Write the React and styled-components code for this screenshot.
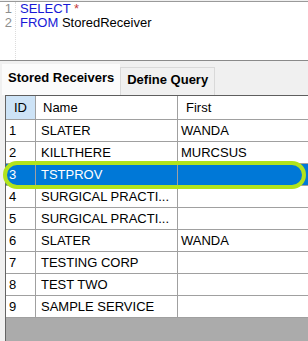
import React from "react";
import styled, { createGlobalStyle } from "styled-components";

const GlobalStyle = createGlobalStyle`
  *, *::before, *::after { box-sizing: border-box; }
  html, body { margin: 0; padding: 0; }
  body { background: #f0f0f0; font-family: "Liberation Sans", Arial, sans-serif; }
`;

const Page = styled.div`
  position: relative;
  width: 308px;
  height: 341px;
  display: flex;
  flex-direction: column;
  overflow: hidden;
  background: #f0f0f0;
`;

const Editor = styled.div`
  margin-top: 1px;
  height: 60px;
  background: #ffffff;
  border-top: 1px solid #9a9a9a;
  border-bottom: 1px solid #8a8a8a;
  display: flex;
  font-size: 13px;
  line-height: 14px;
`;

const Gutter = styled.div`
  width: 12px;
  text-align: right;
  color: #8e8e8e;
  display: flex;
  flex-direction: column;
`;

const GutterRule = styled.div`
  margin-left: 3px;
  border-left: 1px dotted #dcdcdc;
`;

const Code = styled.div`
  padding-left: 4px;
  display: flex;
  flex-direction: column;
  color: #000;
`;

const Keyword = styled.span`
  color: #1818d6;
`;

const Operator = styled.span`
  color: #c43a3a;
`;

const TabStrip = styled.div`
  height: 34px;
  display: flex;
  align-items: flex-end;
  padding-left: 2px;
  background: #f0f0f0;
`;

const Tab = styled.div`
  font-weight: bold;
  font-size: 13px;
  line-height: 16px;
  color: #000;
  white-space: nowrap;
  height: ${(p) => (p.$active ? "31px" : "28px")};
  padding: ${(p) => (p.$active ? "6px 6px 0" : "4px 6px 0")};
  background: ${(p) => (p.$active ? "#fbfbfb" : "#f0f0f0")};
  border: ${(p) => (p.$active ? "none" : "1px solid #d9d9d9")};
  border-bottom: none;
`;

const Grid = styled.div`
  flex: 1;
  margin-left: 5px;
  border-left: 1px solid #646464;
  border-top: 1px solid #5e5e5e;
  background: #ababab;
  display: flex;
  flex-direction: column;
`;

const Row = styled.div`
  display: grid;
  grid-template-columns: 30px 142px 1fr;
  background: ${(p) => (p.$selected ? "#0078d7" : "#ffffff")};
  color: ${(p) => (p.$selected ? "#ffffff" : "#000000")};
`;

const Cell = styled.div`
  height: ${(p) => (p.$header ? "24px" : "22px")};
  line-height: ${(p) => (p.$header ? "23px" : "21px")};
  font-size: 13px;
  padding-left: ${(p) => p.$pad}px;
  text-align: ${(p) => (p.$center ? "center" : "left")};
  background: ${(p) => (p.$tint ? "#cde3f6" : "transparent")};
  border-bottom: 1px solid #a0a0a0;
  border-right: ${(p) => (p.$last ? "none" : "1px solid #a0a0a0")};
  white-space: nowrap;
  overflow: hidden;
`;

const Highlight = styled.div`
  position: absolute;
  left: 3px;
  top: 161px;
  width: 303px;
  height: 28px;
  border: 4px solid #b2e31c;
  border-radius: 14px;
  pointer-events: none;
`;

const rows = [
  ["1", "SLATER", "WANDA"],
  ["2", "KILLTHERE", "MURCSUS"],
  ["3", "TSTPROV", ""],
  ["4", "SURGICAL PRACTI...", ""],
  ["5", "SURGICAL PRACTI...", ""],
  ["6", "SLATER", "WANDA"],
  ["7", "TESTING CORP", ""],
  ["8", "TEST TWO", ""],
  ["9", "SAMPLE SERVICE", ""],
];

export default function App() {
  return (
    <>
      <GlobalStyle />
      <Page>
        <Editor>
          <Gutter>
            <span>1</span>
            <span>2</span>
          </Gutter>
          <GutterRule />
          <Code>
            <span>
              <Keyword>SELECT</Keyword> <Operator>*</Operator>
            </span>
            <span>
              <Keyword>FROM</Keyword> StoredReceiver
            </span>
          </Code>
        </Editor>
        <TabStrip>
          <Tab $active>Stored Receivers</Tab>
          <Tab>Define Query</Tab>
        </TabStrip>
        <Grid>
          <Row>
            <Cell $header $tint $center $pad={0}>ID</Cell>
            <Cell $header $pad={7}>Name</Cell>
            <Cell $header $last $pad={8}>First</Cell>
          </Row>
          {rows.map(([id, name, first]) => (
            <Row key={id} $selected={id === "3"}>
              <Cell $pad={3}>{id}</Cell>
              <Cell $pad={5}>{name}</Cell>
              <Cell $last $pad={3}>{first}</Cell>
            </Row>
          ))}
        </Grid>
        <Highlight />
      </Page>
    </>
  );
}
